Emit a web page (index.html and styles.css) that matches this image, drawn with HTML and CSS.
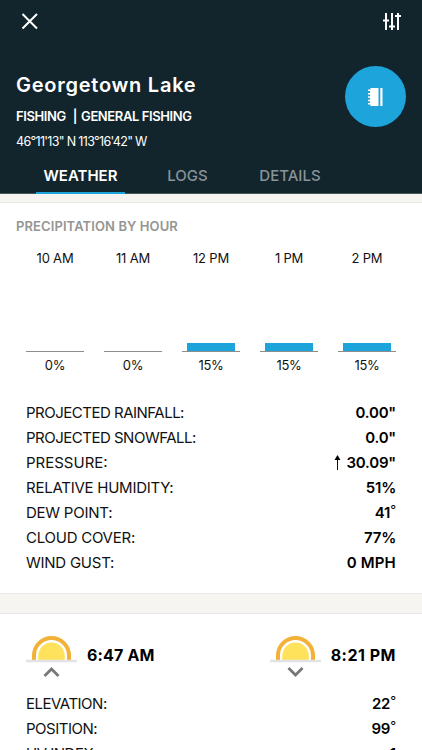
FILE: index.html
```html
<!DOCTYPE html>
<html lang="en">
<head>
    <meta charset="UTF-8">
    <meta name="viewport" content="width=device-width, initial-scale=1.0">
    <title>Georgetown Lake</title>
    <link rel="stylesheet" href="styles.css">
</head>
<body>
    <div class="screen">
        <header class="header">
            <div class="top-bar">
                <svg class="icon-close" viewBox="0 0 18 18"><path d="M1.500 2L16 16.500M16 2L1.500 16.500"/></svg>
                <svg class="icon-filter" viewBox="0 0 20 18"><path d="M4 1V18M10 1V18M16 1V18M1 8.500H7M7 14.500H13M13 4H19"/></svg>
            </div>
            <div class="place">
                <div class="place-info">
                    <h1>Georgetown Lake</h1>
                    <div class="category"><span>FISHING</span><span class="divider">|</span><span>GENERAL FISHING</span></div>
                    <div class="coords">46°11'13" N 113°16'42" W</div>
                </div>
                <button class="log-btn" aria-label="Add log">
                    <svg viewBox="0 0 15 18"><path d="M2.500 0H10.500V18H2.500V16.500H0V15H2V13.200H0V11.700H2V9.800H0V8.300H2V6.400H0V4.900H2V3H0V1.500H2.500ZM12.300 0H14.500V18H12.300Z"/></svg>
                </button>
            </div>
            <nav class="tabs">
                <a class="tab tab-weather active">WEATHER</a>
                <a class="tab tab-logs">LOGS</a>
                <a class="tab tab-details">DETAILS</a>
            </nav>
        </header>

        <!-- precipitation -->
        <section class="card precip">
            <h2>PRECIPITATION BY HOUR</h2>
            <div class="chart">
                <div class="hour"><span class="time">10 AM</span><div class="plot"></div><span class="pct">0%</span></div>
                <div class="hour"><span class="time">11 AM</span><div class="plot"></div><span class="pct">0%</span></div>
                <div class="hour"><span class="time">12 PM</span><div class="plot"><div class="bar"></div></div><span class="pct">15%</span></div>
                <div class="hour"><span class="time">1 PM</span><div class="plot"><div class="bar"></div></div><span class="pct">15%</span></div>
                <div class="hour"><span class="time">2 PM</span><div class="plot"><div class="bar"></div></div><span class="pct">15%</span></div>
            </div>
            <dl class="stats">
                <div class="row tight"><dt>PROJECTED RAINFALL:</dt><dd>0.00"</dd></div>
                <div class="row tight"><dt>PROJECTED SNOWFALL:</dt><dd>0.0"</dd></div>
                <div class="row loose"><dt>PRESSURE:</dt><dd><svg class="arrow" viewBox="0 0 7 15"><path class="stem" d="M3.500 4V15"/><path d="M3.500 0L6.500 5H0.500Z"/></svg>30.09"</dd></div>
                <div class="row"><dt>RELATIVE HUMIDITY:</dt><dd>51%</dd></div>
                <div class="row"><dt>DEW POINT:</dt><dd>41<span class="deg">°</span></dd></div>
                <div class="row"><dt>CLOUD COVER:</dt><dd>77%</dd></div>
                <div class="row"><dt>WIND GUST:</dt><dd class="wide">0 MPH</dd></div>
            </dl>
        </section>

        <!-- sun -->
        <section class="card sun">
            <div class="sun-times">
                <div class="sun-time sunrise">
                    <svg class="sun-icon" viewBox="0 0 51 42">
                        <path class="ring" d="M8 24.500V19.500A17.500 17.500 0 0 1 43 19.500V24.500"/>
                        <path class="disc" d="M12.500 24.500C10.500 14 17 6.500 25.500 6.500S40.500 14 38.500 24.500Z"/>
                        <path class="horizon" d="M0 25H51"/>
                        <path class="chevron" d="M18.500 40L25.500 33L32.500 40"/>
                    </svg>
                    <span>6:47 AM</span>
                </div>
                <div class="sun-time sunset">
                    <svg class="sun-icon" viewBox="0 0 51 42">
                        <path class="ring" d="M8 24.500V19.500A17.500 17.500 0 0 1 43 19.500V24.500"/>
                        <path class="disc" d="M12.500 24.500C10.500 14 17 6.500 25.500 6.500S40.500 14 38.500 24.500Z"/>
                        <path class="horizon" d="M0 25H51"/>
                        <path class="chevron" d="M18.500 32L25.500 39L32.500 32"/>
                    </svg>
                    <span>8:21 PM</span>
                </div>
            </div>
            <dl class="stats">
                <div class="row tight"><dt>ELEVATION:</dt><dd>22<span class="deg">°</span></dd></div>
                <div class="row tight"><dt>POSITION:</dt><dd>99<span class="deg">°</span></dd></div>
                <div class="row tight"><dt>UV INDEX:</dt><dd>1</dd></div>
            </dl>
        </section>
    </div>
</body>
</html>
```
FILE: styles.css
```css
:root {
    --dark: #12252d;
    --blue: #1da4da;
    --page: #f6f5f1;
}

* {
    box-sizing: border-box;
}

body {
    margin: 0;
    background: var(--page);
    color: #111;
    font-family: Inter, "Liberation Sans", sans-serif;
}

h1, h2, dl, dd {
    margin: 0;
}

.screen {
    height: 750px;
    overflow: hidden;
}

.header {
    height: 194px;
    background: var(--dark);
    color: #fff;
    border-bottom: 1px solid #4b565b;
}

.top-bar {
    display: flex;
    justify-content: space-between;
    padding: 12px 20px 0 21px;
    height: 66px;
}

.top-bar svg {
    fill: none;
    stroke: #fff;
    stroke-width: 2;
}

.icon-close {
    width: 18px;
    height: 18px;
}

.icon-filter {
    width: 20px;
    height: 18px;
}

.place {
    display: flex;
    justify-content: space-between;
    height: 92px;
    padding: 0 16px;
}

h1 {
    margin-top: 5px;
    font-size: 20px;
    line-height: 28px;
    font-weight: 600;
    letter-spacing: 0.75px;
}

.category {
    display: flex;
    margin-top: 5px;
    font-size: 13px;
    line-height: 24px;
    font-weight: 600;
    letter-spacing: -0.4px;
}

.divider {
    margin: 0 4px 0 7px;
}

.coords {
    margin-top: 2px;
    font-size: 12.5px;
    line-height: 24px;
    letter-spacing: -0.68px;
}

.log-btn {
    display: flex;
    align-items: center;
    justify-content: center;
    width: 61px;
    height: 61px;
    padding: 0;
    border: none;
    border-radius: 50%;
    background: var(--blue);
}

.log-btn svg {
    width: 15px;
    height: 18px;
    fill: #fff;
}

.tabs {
    display: flex;
    padding-left: 36px;
}

.tab {
    height: 36px;
    line-height: 35px;
    font-size: 15px;
    font-weight: 500;
    color: #88939a;
    text-align: center;
}

.tab-weather {
    width: 89px;
}

.tab-logs {
    width: 125px;
}

.tab-details {
    width: 80px;
}

.tab.active {
    color: #fff;
    font-weight: 600;
    border-bottom: 2px solid var(--blue);
}

.card {
    background: #fff;
    border-top: 1px solid #e8e8e8;
    border-bottom: 1px solid #e8e8e8;
}

.precip {
    height: 392px;
    margin-top: 8px;
}

h2 {
    padding: 13px 16px 0;
    font-size: 13px;
    line-height: 20px;
    font-weight: 600;
    letter-spacing: 0.1px;
    color: #959592;
}

.chart {
    display: flex;
    justify-content: space-between;
    padding: 12px 26px 0;
}

.hour {
    width: 58px;
    text-align: center;
    font-size: 13px;
    line-height: 20px;
}

.time, .pct {
    display: block;
    white-space: nowrap;
}

.time {
    letter-spacing: -0.2px;
}

.plot {
    display: flex;
    align-items: flex-end;
    justify-content: center;
    height: 84px;
    border-bottom: 1px solid #8d8d8d;
}

.bar {
    width: 48px;
    height: 8px;
    background: var(--blue);
}

.pct {
    margin-top: 3px;
    letter-spacing: -0.3px;
}

.stats {
    padding: 24.500px 26px 0;
}

.row {
    display: flex;
    justify-content: space-between;
    font-size: 15px;
    line-height: 25.150px;
}

dt {
    letter-spacing: -0.25px;
}

.tight dt {
    letter-spacing: -0.5px;
}

.loose dt {
    letter-spacing: 0;
}

dd {
    display: flex;
    font-weight: 600;
    letter-spacing: -0.2px;
    color: #000;
}

dd.wide {
    letter-spacing: 0.2px;
}

.arrow {
    width: 7px;
    height: 15px;
    margin: 5px 5px 0 0;
}

.arrow .stem {
    fill: none;
    stroke: #111;
}

.deg {
    font-weight: 400;
    font-size: 13px;
    line-height: 21px;
}

.sun {
    height: 200px;
    margin-top: 19px;
}

.sun-times {
    display: flex;
    justify-content: space-between;
    padding: 22px 26px 0;
}

.sun-time {
    display: flex;
    font-size: 16px;
    line-height: 39px;
    font-weight: 700;
    color: #000;
}

.sunrise {
    letter-spacing: 0.15px;
}

.sunset {
    letter-spacing: 0.5px;
}

.sun-icon {
    width: 51px;
    height: 42px;
    margin-right: 10px;
}

.sun-icon path {
    fill: none;
}

.sun-icon .ring {
    stroke: #f2b137;
    stroke-width: 4;
}

.sun-icon .disc {
    fill: #ffe25c;
}

.sun-icon .horizon {
    stroke: #e3e3e5;
    stroke-width: 2.500;
}

.sun-icon .chevron {
    stroke: #777;
    stroke-width: 2.800;
}

.sun .stats {
    padding-top: 13px;
}
```
